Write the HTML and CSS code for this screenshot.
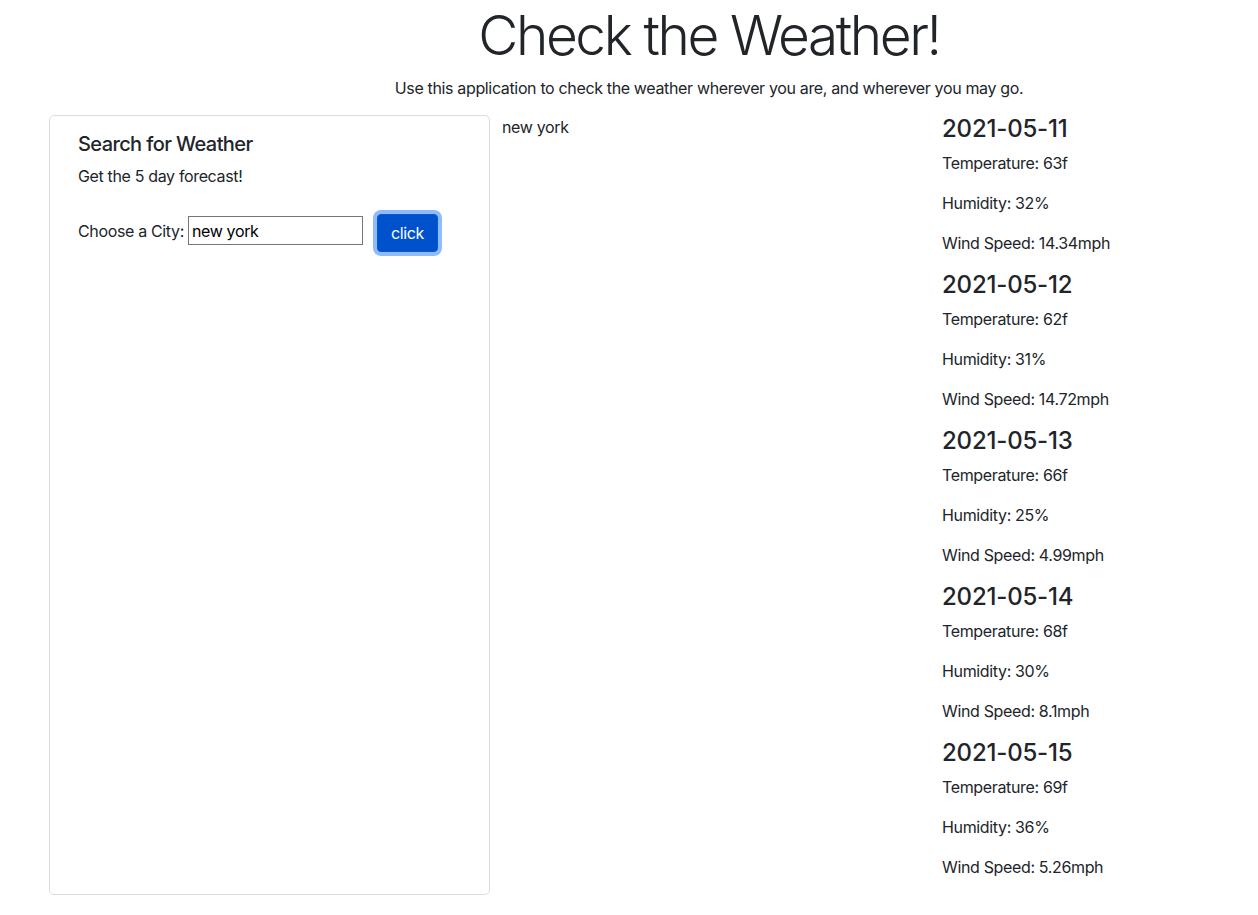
FILE: index.html
```html
<!DOCTYPE html>
<html lang="en">
<head>
<meta charset="utf-8">
<title>Check the Weather!</title>
<link rel="stylesheet" href="styles.css">
</head>
<body>
<header class="hero">
  <h1 class="hero-title">Check the Weather!</h1>
  <p class="hero-lead">Use this application to check the weather wherever you are, and wherever you may go.</p>
</header>
<main class="layout">
  <section class="search-card">
    <h5 class="card-title">Search for Weather</h5>
    <p class="card-text">Get the 5 day forecast!</p>
    <div class="search-form">
      <label class="city-label" for="city">Choose a City:</label>
      <input class="city-input" id="city" type="text" value="new york">
      <button class="search-btn" type="button">click</button>
    </div>
  </section>
  <section class="current">
    <p class="city-name">new york</p>
  </section>
  <section class="forecast">
    <div class="day">
      <h4 class="day-date">2021-05-11</h4>
      <p class="day-stat">Temperature: 63f</p>
      <p class="day-stat">Humidity: 32%</p>
      <p class="day-stat">Wind Speed: 14.34mph</p>
    </div>
    <div class="day">
      <h4 class="day-date">2021-05-12</h4>
      <p class="day-stat">Temperature: 62f</p>
      <p class="day-stat">Humidity: 31%</p>
      <p class="day-stat">Wind Speed: 14.72mph</p>
    </div>
    <div class="day">
      <h4 class="day-date">2021-05-13</h4>
      <p class="day-stat">Temperature: 66f</p>
      <p class="day-stat">Humidity: 25%</p>
      <p class="day-stat">Wind Speed: 4.99mph</p>
    </div>
    <div class="day">
      <h4 class="day-date">2021-05-14</h4>
      <p class="day-stat">Temperature: 68f</p>
      <p class="day-stat">Humidity: 30%</p>
      <p class="day-stat">Wind Speed: 8.1mph</p>
    </div>
    <div class="day">
      <h4 class="day-date">2021-05-15</h4>
      <p class="day-stat">Temperature: 69f</p>
      <p class="day-stat">Humidity: 36%</p>
      <p class="day-stat">Wind Speed: 5.26mph</p>
    </div>
  </section>
</main>
</body>
</html>
```

FILE: styles.css
```css
* { box-sizing: border-box; }

html, body {
  margin: 0;
  padding: 0;
  background: #fff;
}

body {
  font-family: Inter, "Noto Sans", "Liberation Sans", sans-serif;
  font-size: 16px;
  line-height: 24px;
  letter-spacing: -0.35px;
  color: #212529;
}

.hero {
  padding-left: 160px;
  text-align: center;
}

.hero-title {
  margin: 0;
  padding-top: 1px;
  font-size: 55px;
  font-weight: 300;
  line-height: 68px;
  letter-spacing: -2.4px;
}

.hero-lead {
  margin: 7px 0 0;
  font-size: 16px;
  line-height: 24px;
}

.layout {
  display: flex;
  align-items: stretch;
  margin-top: 15px;
  padding-left: 49px;
}

.search-card {
  flex: 0 0 441px;
  border: 1px solid #dcdcdc;
  border-radius: 5px;
  padding: 16px 20px 16px 28px;
}

.card-title {
  margin: 0 0 8px;
  font-size: 20px;
  font-weight: 500;
  line-height: 24px;
  letter-spacing: -0.6px;
}

.card-text {
  margin: 0 0 16px;
}

.search-form {
  display: flex;
  align-items: flex-start;
  margin-top: 26px;
}

.city-label {
  margin: 5px 4px 0 0;
}

.city-input {
  width: 175px;
  height: 29px;
  margin: 2px 0 0;
  padding: 1px 3px;
  border: 1px solid #767676;
  border-radius: 0;
  font-family: inherit;
  font-size: 16px;
  letter-spacing: -0.35px;
  color: #000;
  outline: none;
}

.search-btn {
  margin-left: 14px;
  height: 38px;
  padding: 6px 13px;
  border: 1px solid #0a58ca;
  border-radius: 4px;
  background: #0052cc;
  color: #fff;
  font-family: inherit;
  font-size: 16px;
  line-height: 24px;
  letter-spacing: -0.35px;
  box-shadow: 0 0 0 4px rgba(49, 132, 253, 0.55);
}

.current {
  flex: 0 0 440px;
  padding-left: 12px;
}

.city-name {
  margin: 0;
}

.forecast {
  flex: 1 1 auto;
  padding-left: 12px;
}

.day-date {
  margin: 0 0 8px;
  font-size: 24px;
  font-weight: 500;
  line-height: 28px;
  letter-spacing: -0.2px;
}

.day-stat {
  margin: 0 0 16px;
}
```
